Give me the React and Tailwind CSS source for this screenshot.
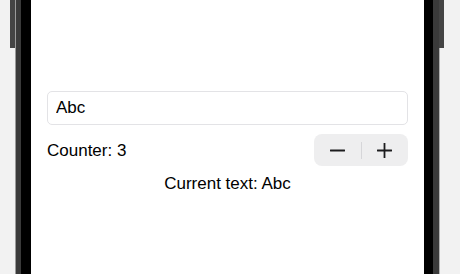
// Phone simulator frame with a small text field + counter demo.

import { useState } from "react";

const font = { fontFamily: '"Liberation Sans", Arial, sans-serif' };

function MinusIcon() {
  return (
    <svg width="15" height="15" viewBox="0 0 15 15" className="block">
      <line x1="0.5" y1="7.5" x2="14.5" y2="7.5" stroke="#1c1c1e" strokeWidth="1.8" strokeLinecap="round" />
    </svg>
  );
}

function PlusIcon() {
  return (
    <svg width="15" height="15" viewBox="0 0 15 15" className="block">
      <line x1="0.5" y1="7.5" x2="14.5" y2="7.5" stroke="#1c1c1e" strokeWidth="1.8" strokeLinecap="round" />
      <line x1="7.5" y1="0.5" x2="7.5" y2="14.5" stroke="#1c1c1e" strokeWidth="1.8" strokeLinecap="round" />
    </svg>
  );
}

export default function App() {
  const [text, setText] = useState("Abc");
  const [count, setCount] = useState(3);

  return (
    <div className="flex h-[274px] w-[460px] overflow-hidden bg-[#f2f2f2]" style={font}>
      {/* Left edge of the device */}
      <div className="flex w-[10px] shrink-0" />
      <div className="flex w-[5px] shrink-0 flex-col">
        <div className="h-[48px] bg-[#444444]" />
      </div>
      <div className="w-[1px] shrink-0 bg-[#9a9a9a]" />
      <div className="w-[5px] shrink-0 bg-[#3a3a3a]" />
      <div className="w-[10px] shrink-0 bg-black" />

      {/* Screen */}
      <div className="flex w-[393px] shrink-0 flex-col bg-white px-4 pt-[91px] text-[17px] text-black">
        <input
          value={text}
          onChange={(e) => setText(e.target.value)}
          className="h-[34px] w-full rounded-[5px] border border-[#e3e3e6] px-2 text-[17px] text-black outline-none"
          style={font}
        />

        <div className="mt-[9px] flex items-center justify-between">
          <span className="pt-[2px] leading-[22px]">Counter: {count}</span>
          <div className="flex h-[32px] w-[94px] items-center rounded-[8px] bg-[#eeeeef]">
            <button
              type="button"
              onClick={() => setCount((c) => c - 1)}
              className="flex h-full flex-1 items-center justify-center"
            >
              <MinusIcon />
            </button>
            <div className="h-[17px] w-[1px] bg-[#d6d6d9]" />
            <button
              type="button"
              onClick={() => setCount((c) => c + 1)}
              className="flex h-full flex-1 items-center justify-center"
            >
              <PlusIcon />
            </button>
          </div>
        </div>

        <div className="mt-[7px] text-center leading-[22px]">Current text: {text}</div>
      </div>

      {/* Right edge of the device */}
      <div className="w-[9px] shrink-0 bg-black" />
      <div className="w-[6px] shrink-0 bg-[#3a3a3a]" />
      <div className="flex w-[5px] shrink-0 flex-col">
        <div className="h-[48px] bg-[#444444]" />
        <div className="w-[1px] flex-1 bg-[#b0b0b0]" />
      </div>
    </div>
  );
}
